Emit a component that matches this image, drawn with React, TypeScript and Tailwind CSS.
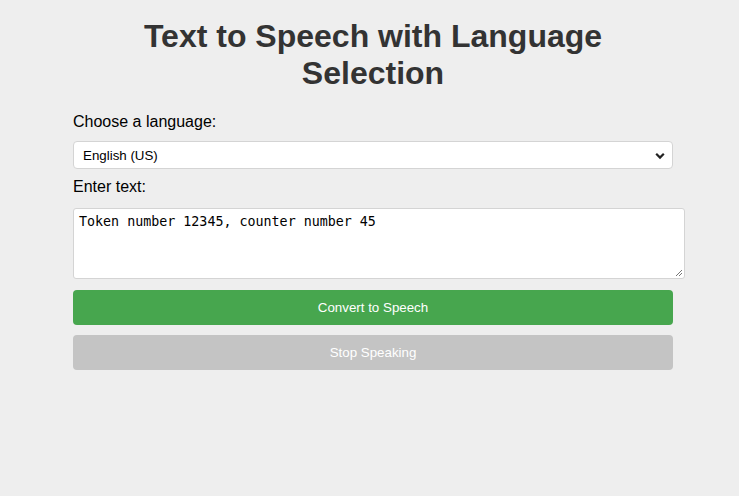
import React from "react";

export default function App() {
  return (
    <div className="min-h-[496px] w-full bg-[#eeeeee] font-['Liberation_Sans',Arial,sans-serif]">
      <div className="ml-[73px] w-[600px] pt-[18px]">
        <h1 className="mb-[21px] text-center text-[32px] font-bold leading-[36.8px] text-[#333333]">
          Text to Speech with Language Selection
        </h1>
        <label className="mb-[10px] block text-[16px] leading-[18.4px] text-black">Choose a language:</label>
        <div className="relative mb-[9px] h-[28px] w-[600px] rounded-[4px] border border-[#d4d4d4] bg-white">
          <span className="absolute left-[9px] top-[6px] text-[13.33px] leading-[15px] text-black">English (US)</span>
          <svg className="absolute right-[7px] top-[10px]" width="10" height="8" viewBox="0 0 10 8">
            <path d="M1.2 1.8 L5 5.6 L8.8 1.8" fill="none" stroke="#222" strokeWidth="2.2" />
          </svg>
        </div>
        <label className="mb-[12px] block text-[16px] leading-[18.4px] text-black">Enter text:</label>
        <div className="relative mb-[11px] h-[71px] w-[612px] rounded-[3px] border border-[#d4d4d4] bg-white px-[5px] py-[5px]">
          <span className="block font-['DejaVu_Sans_Mono',monospace] text-[13.33px] leading-[15px] text-black">
            Token number 12345, counter number 45
          </span>
          <svg className="absolute bottom-[1px] right-[1px]" width="9" height="9" viewBox="0 0 9 9">
            <path d="M8 2 L2 8 M8 5 L5 8" stroke="#777" strokeWidth="1" />
          </svg>
        </div>
        <div className="mb-[10px] flex h-[35px] w-[600px] items-center justify-center rounded-[4px] bg-[#47a64e] text-[13.33px] text-white">
          Convert to Speech
        </div>
        <div className="flex h-[35px] w-[600px] items-center justify-center rounded-[4px] bg-[#c4c4c4] text-[13.33px] text-white">
          Stop Speaking
        </div>
      </div>
    </div>
  );
}
